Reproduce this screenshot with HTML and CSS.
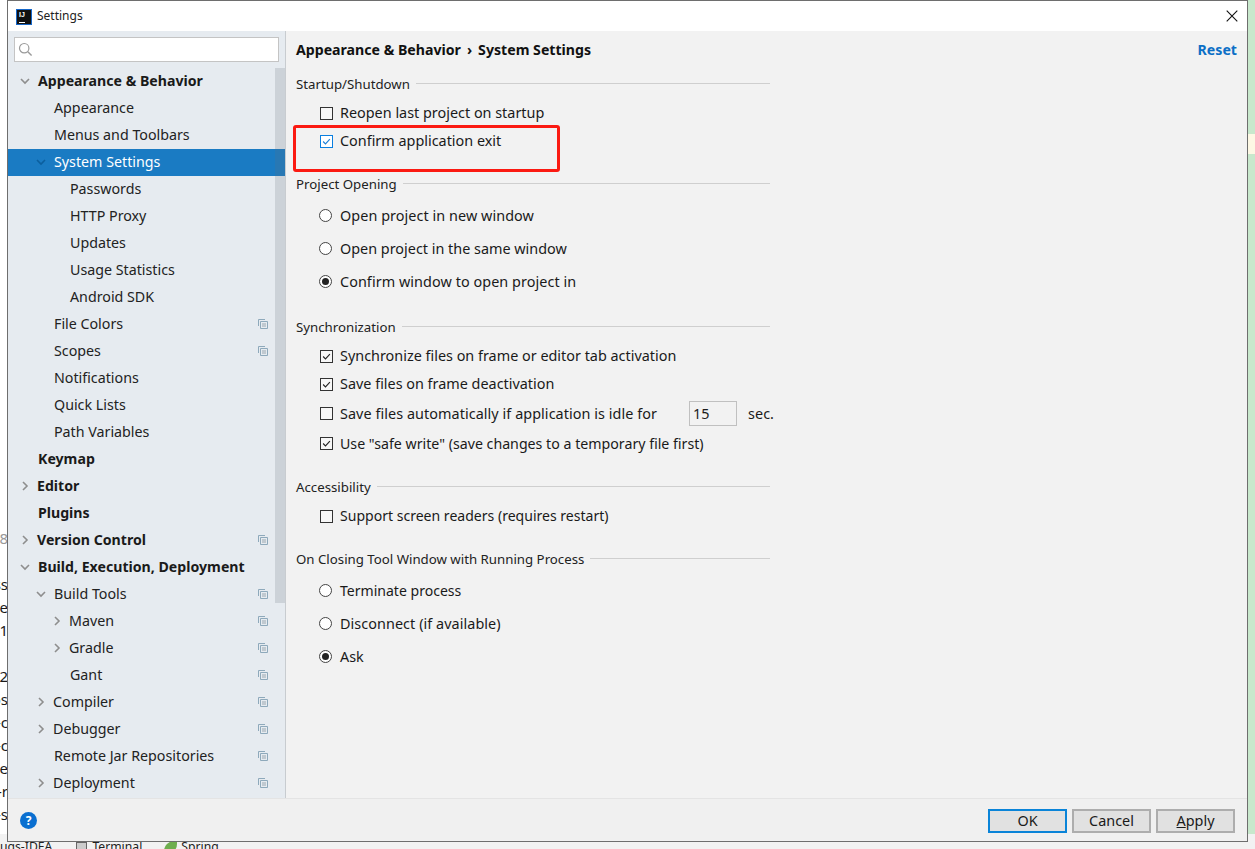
FILE: index.html
```html
<!DOCTYPE html>
<html lang="en">
<head>
<meta charset="utf-8">
<title>Settings</title>
<link rel="stylesheet" href="styles.css">
</head>
<body>
<svg class="defs" width="0" height="0" aria-hidden="true">
  <symbol id="down" viewBox="0 0 10 10"><path d="M1 3 L5 7 L9 3" fill="none" stroke-width="1.6"/></symbol>
  <symbol id="right" viewBox="0 0 10 10"><path d="M3 1 L7 5 L3 9" fill="none" stroke-width="1.6"/></symbol>
  <symbol id="copy" viewBox="0 0 10 10"><path d="M0.5 7V0.5H7" fill="none" stroke="#8ea9bb"/><path d="M2.5 2.5H9.5V9.5H2.5Z" fill="#e6ebf0" stroke="#8ea9bb"/><path d="M4 5H8M4 7H8" stroke="#9aa7b0"/></symbol>
  <symbol id="tick" viewBox="0 0 13 13"><path d="M2.5 6.5 L5.3 9.3 L10.5 3.6" fill="none" stroke-width="1.3"/></symbol>
</svg>
<div class="desktop">
  <div class="gutter">
    <span class="frag frag-grey">8</span>
    <span class="frag frag-skip"></span>
    <span class="frag">ss</span>
    <span class="frag">re</span>
    <span class="frag">1</span>
    <span class="frag"></span>
    <span class="frag">2</span>
    <span class="frag">os</span>
    <span class="frag">-c</span>
    <span class="frag">-c</span>
    <span class="frag">-e</span>
    <span class="frag">-r</span>
    <span class="frag">-s</span>
  </div>
  <div class="taskbar">
    <span class="task task-idea">ugs-IDEA</span>
    <span class="task-icon"></span><span class="task task-term">Terminal</span>
    <span class="leaf"></span><span class="task">Spring</span>
  </div>
  <div class="strip"><span class="cream"></span></div>

  <div class="window">
    <header class="titlebar">
      <span class="logo"><span class="logo-text">IJ</span><span class="logo-bar"></span></span>
      <span class="title">Settings</span>
      <svg class="close" width="12" height="12" viewBox="0 0 12 12"><path d="M0.7 0.7 L11.3 11.3 M11.3 0.7 L0.7 11.3" stroke="#111" stroke-width="1.1"/></svg>
    </header>
    <div class="body">
      <nav class="sidebar">
        <div class="search">
          <svg width="15" height="15" viewBox="0 0 15 15"><circle cx="6.2" cy="6.2" r="4.7" fill="none" stroke="#9a9a9a" stroke-width="1.2"/><path d="M9.8 9.8 L13.6 13.6" stroke="#9a9a9a" stroke-width="1.4"/></svg>
        </div>
        <div class="tree">
          <div class="row l0 strong"><svg class="arrow"><use href="#down"/></svg><span>Appearance &amp; Behavior</span></div>
          <div class="row l1"><i class="arrow"></i><span>Appearance</span></div>
          <div class="row l1"><i class="arrow"></i><span>Menus and Toolbars</span></div>
          <div class="row l1 selected"><svg class="arrow"><use href="#down"/></svg><span>System Settings</span></div>
          <div class="row l2"><i class="arrow"></i><span>Passwords</span></div>
          <div class="row l2"><i class="arrow"></i><span>HTTP Proxy</span></div>
          <div class="row l2"><i class="arrow"></i><span>Updates</span></div>
          <div class="row l2"><i class="arrow"></i><span>Usage Statistics</span></div>
          <div class="row l2"><i class="arrow"></i><span>Android SDK</span></div>
          <div class="row l1"><i class="arrow"></i><span>File Colors</span><svg class="copy"><use href="#copy"/></svg></div>
          <div class="row l1"><i class="arrow"></i><span>Scopes</span><svg class="copy"><use href="#copy"/></svg></div>
          <div class="row l1"><i class="arrow"></i><span>Notifications</span></div>
          <div class="row l1"><i class="arrow"></i><span>Quick Lists</span></div>
          <div class="row l1"><i class="arrow"></i><span>Path Variables</span></div>
          <div class="row l0 strong"><i class="arrow"></i><span>Keymap</span></div>
          <div class="row l0 strong closed"><svg class="arrow"><use href="#right"/></svg><span>Editor</span></div>
          <div class="row l0 strong"><i class="arrow"></i><span>Plugins</span></div>
          <div class="row l0 strong closed"><svg class="arrow"><use href="#right"/></svg><span>Version Control</span><svg class="copy"><use href="#copy"/></svg></div>
          <div class="row l0 strong"><svg class="arrow"><use href="#down"/></svg><span>Build, Execution, Deployment</span></div>
          <div class="row l1"><svg class="arrow"><use href="#down"/></svg><span>Build Tools</span><svg class="copy"><use href="#copy"/></svg></div>
          <div class="row l2 closed"><svg class="arrow"><use href="#right"/></svg><span>Maven</span><svg class="copy"><use href="#copy"/></svg></div>
          <div class="row l2 closed"><svg class="arrow"><use href="#right"/></svg><span>Gradle</span><svg class="copy"><use href="#copy"/></svg></div>
          <div class="row l2"><i class="arrow"></i><span>Gant</span><svg class="copy"><use href="#copy"/></svg></div>
          <div class="row l1 closed"><svg class="arrow"><use href="#right"/></svg><span>Compiler</span><svg class="copy"><use href="#copy"/></svg></div>
          <div class="row l1 closed"><svg class="arrow"><use href="#right"/></svg><span>Debugger</span><svg class="copy"><use href="#copy"/></svg></div>
          <div class="row l1"><i class="arrow"></i><span>Remote Jar Repositories</span><svg class="copy"><use href="#copy"/></svg></div>
          <div class="row l1 closed"><svg class="arrow"><use href="#right"/></svg><span>Deployment</span><svg class="copy"><use href="#copy"/></svg></div>
        </div>
        <div class="scrollbar"></div>
      </nav>
      <main class="panel">
        <div class="crumbs">
          <span class="crumb">Appearance &amp; Behavior<span class="sep">›</span>System Settings</span>
          <a class="reset">Reset</a>
        </div>
        <div class="form">
          <section class="group">
            <div class="head"><span>Startup/Shutdown</span><hr></div>
            <div class="rows">
              <div class="opt check"><span class="box"></span><span>Reopen last project on startup</span></div>
              <div class="opt check"><span class="box focused"><svg><use href="#tick"/></svg></span><span>Confirm application exit</span></div>
            </div>
          </section>
          <section class="group">
            <div class="head"><span>Project Opening</span><hr></div>
            <div class="rows">
              <div class="opt radio wide"><span class="dot"></span><span>Open project in new window</span></div>
              <div class="opt radio"><span class="dot"></span><span>Open project in the same window</span></div>
              <div class="opt radio wide"><span class="dot on"></span><span>Confirm window to open project in</span></div>
            </div>
          </section>
          <section class="group">
            <div class="head"><span>Synchronization</span><hr></div>
            <div class="rows">
              <div class="opt check"><span class="box"><svg><use href="#tick"/></svg></span><span>Synchronize files on frame or editor tab activation</span></div>
              <div class="opt check"><span class="box"><svg><use href="#tick"/></svg></span><span>Save files on frame deactivation</span></div>
              <div class="opt check tall wide"><span class="box"></span><span class="idle">Save files automatically if application is idle for</span><span class="field">15</span><span>sec.</span></div>
              <div class="opt check tall tight"><span class="box"><svg><use href="#tick"/></svg></span><span>Use "safe write" (save changes to a temporary file first)</span></div>
            </div>
          </section>
          <section class="group">
            <div class="head"><span>Accessibility</span><hr></div>
            <div class="rows">
              <div class="opt check snug"><span class="box"></span><span>Support screen readers (requires restart)</span></div>
            </div>
          </section>
          <section class="group">
            <div class="head"><span>On Closing Tool Window with Running Process</span><hr></div>
            <div class="rows">
              <div class="opt radio snug"><span class="dot"></span><span>Terminate process</span></div>
              <div class="opt radio wide"><span class="dot"></span><span>Disconnect (if available)</span></div>
              <div class="opt radio"><span class="dot on"></span><span>Ask</span></div>
            </div>
          </section>
        </div>
        <div class="annotation"></div>
      </main>
    </div>
    <footer class="footer">
      <span class="help">?</span>
      <div class="buttons">
        <button class="btn default">OK</button>
        <button class="btn">Cancel</button>
        <button class="btn"><u>A</u>pply</button>
      </div>
    </footer>
  </div>
</div>
</body>
</html>
```
FILE: styles.css
```css
* { box-sizing: border-box; }
html, body { margin: 0; padding: 0; }
body {
  width: 1255px; height: 849px; overflow: hidden; background: #fff;
  font: 14.4px/20px "Noto Sans", "Liberation Sans", sans-serif; color: #1a1a1a;
}
.defs { position: absolute; }
.desktop { position: relative; width: 1255px; height: 849px; overflow: hidden; }

.gutter {
  position: absolute; left: 0; top: 527px; width: 8px; height: 300px;
  display: flex; flex-direction: column; align-items: flex-end; overflow: hidden;
}
.frag { height: 23px; line-height: 23px; white-space: nowrap; flex: none; font-size: 15px; }
.frag-grey { color: #999; }
.frag-skip { height: 23px; }

.taskbar {
  position: absolute; left: 0; top: 834px; width: 1255px; height: 15px;
  display: flex; align-items: flex-start; padding-top: 5px;
  background: #f2f2f2; font-size: 12.2px; line-height: 18px; color: #222;
}
.task { margin-top: -1px; }
.task-icon { width: 11px; height: 11px; margin: 3px 5px 0 24px; border: 1px solid #666; background: #ccc; }
.leaf { width: 13px; height: 13px; margin: 2px 4px 0 22px; background: #6fae4f; border-radius: 10px 0 10px 0; }

.strip { position: absolute; left: 1248px; top: 0; width: 7px; height: 834px; background: #c8e8cc; }
.cream { display: block; margin-top: 134px; height: 20px; background: #fdf8e4; }

.window {
  position: absolute; left: 7px; top: 0; width: 1241px; height: 842px;
  display: flex; flex-direction: column; background: #f2f2f2;
  border: 1px solid #6e6e6e;
}
.titlebar { flex: none; height: 30px; background: #fff; display: flex; align-items: center; padding-left: 8px; }
.logo {
  position: relative; width: 16px; height: 16px; flex: none; background: #111;
  border: 1px solid #1667c9; margin-top: 1px;
}
.logo-text { position: absolute; left: 2px; top: 1px; font: 700 7px/8px "Liberation Sans", sans-serif; color: #fff; }
.logo-bar { position: absolute; left: 2px; bottom: 1px; width: 6px; height: 1px; background: #fff; }
.title { margin-left: 5px; font-size: 12px; color: #222; }
.close { margin-left: auto; margin-right: 9px; }

.body { flex: 1; min-height: 0; display: flex; }
.sidebar {
  position: relative; width: 278px; flex: none; background: #e6ebf0; border-right: 1px solid #c8ccd0;
  display: flex; flex-direction: column; overflow: hidden;
}
.search {
  flex: none; margin: 6px 6px 6px 6px; height: 25px; background: #fff; border: 1px solid #c4c4c4;
  display: flex; align-items: center; padding-left: 3px;
}
.tree { flex: 1; min-height: 0; overflow: hidden; }
.row { height: 27px; padding-bottom: 1px; display: flex; align-items: center; white-space: nowrap; padding-right: 17px; color: #222; font-size: 14.25px; }
.l0 { padding-left: 9px; }
.l1 { padding-left: 25px; }
.l2 { padding-left: 41px; }
.arrow { width: 10px; height: 10px; flex: none; margin: 0 8px 0 3px; stroke: #8e8e8e; }
.closed .arrow + span { margin-left: -1px; }
.strong { font-weight: 700; color: #1a1a1a; font-size: 14.15px; }
.selected { background: #1a7bc3; color: #fff; }
.selected .arrow { stroke: #0b5f9e; }
.copy { width: 10px; height: 10px; margin-left: auto; flex: none; }
.scrollbar {
  position: absolute; right: 0; top: 37px; width: 10px; height: 535px;
  background: rgba(100, 110, 120, 0.2);
}

.panel { position: relative; flex: 1; min-width: 0; background: #f2f2f2; }
.crumbs { height: 44px; padding: 9px 10px 0 10px; display: flex; justify-content: space-between; font-size: 14.15px; }
.crumb { font-weight: 700; color: #111; }
.sep { margin: 0 6px; }
.reset { font-weight: 700; color: #0c6fc6; }
.form { width: 484px; padding-left: 10px; }
.group { margin-bottom: 20px; }
.head { display: flex; align-items: center; height: 20px; padding-bottom: 2px; gap: 6px; white-space: nowrap; color: #222; font-size: 13.25px; }
.head hr { flex: 1; margin: 0 0 2px; border: 0; border-top: 1px solid #cfcfcf; }
.rows { margin-top: 4px; }
.opt { display: flex; align-items: center; white-space: nowrap; padding-left: 24px; color: #1a1a1a; }
.snug { font-size: 14.05px; }
.wide { letter-spacing: 0.06px; }
.tight { font-size: 14.2px; }
.check { height: 28px; }
.radio { height: 33px; }
.tall { height: 30px; padding-top: 1px; }
.box, .dot { flex: none; width: 13px; height: 13px; margin-right: 7px; background: #fff; border: 1px solid #333; }
.box svg { display: block; width: 11px; height: 11px; stroke: #222; }
.box { background: #f7f7f7; }
.box.focused { border-color: #0a7fe0; background: #fff; }
.box.focused svg { stroke: #1a7fd8; }
.dot { border-radius: 50%; border-color: #444; margin-left: -1px; margin-right: 8px; position: relative; }
.dot.on::after { content: ""; position: absolute; left: 2px; top: 2px; width: 7px; height: 7px; border-radius: 50%; background: #222; }
.idle { width: 349px; flex: none; }
.field { width: 48px; height: 25px; flex: none; border: 1px solid #c0c0c0; padding-left: 3px; line-height: 23px; margin-right: 11px; }

.annotation {
  position: absolute; left: 7px; top: 94px; width: 267px; height: 47px;
  border: 3px solid #fb1a12; border-radius: 3px; pointer-events: none;
}

.footer { flex: none; height: 43px; background: #f0f0f0; display: flex; align-items: center; padding: 0 12px 0 12px; border-top: 1px solid #e4e4e4; position: relative; }
.help {
  width: 17px; height: 17px; border-radius: 50%; background: #0a6fd0; color: #fff;
  font: 700 12px/17px "Noto Sans", sans-serif; text-align: center; margin-top: 1px; flex: none;
}
.buttons { margin-left: auto; display: flex; gap: 5px; margin-top: 2px; }
.btn {
  width: 79px; height: 24px; padding: 0; background: #e1e1e1; border: 2px solid #adadad;
  font: 14.4px/20px "Noto Sans", sans-serif; color: #1a1a1a;
}
.btn.default { border-color: #0a84d8; }
```
